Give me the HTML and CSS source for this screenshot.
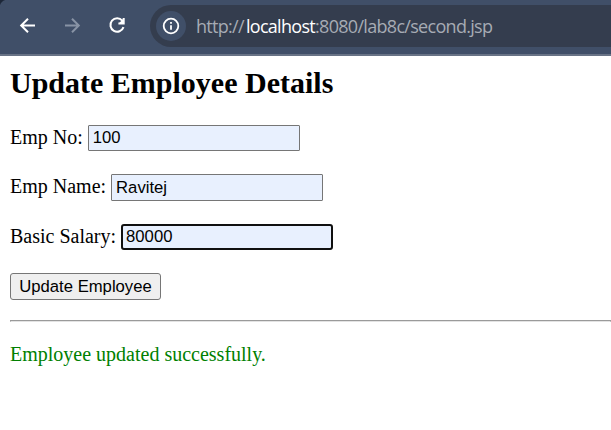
FILE: index.html
```html
<!DOCTYPE html>
<html lang="en">
<head>
<meta charset="utf-8">
<title>Update Employee</title>
<link rel="stylesheet" href="styles.css">
</head>
<body>
<header class="toolbar">
  <svg class="icon" viewBox="0 0 20 20"><path d="M18 9.5H4.5M11 2.7L4.2 9.5l6.8 6.8"/></svg>
  <svg class="icon icon-disabled" viewBox="0 0 20 20"><path d="M3 9.5h13.5M10 2.7l6.8 6.8-6.8 6.8"/></svg>
  <svg class="icon" viewBox="0 0 20 20"><path d="M15.3 4.7A6.7 6.7 0 1 0 16.5 11.1M16.7 2v5.4h-5.3"/><path class="solid" d="M16.7 2.5v5h-5z"/></svg>
  <div class="address">
    <span class="site-info"><svg class="icon-info" viewBox="0 0 18 18"><circle cx="9" cy="9" r="7.3"/><path d="M9 8.2v4.5M9 5v1.8"/></svg></span>
    <span class="url">http://<span class="host">localhost</span>:8080/lab8c/second.jsp</span>
  </div>
</header>
<main class="page">
  <h2>Update Employee Details</h2>
  <form class="form">
    <div class="row"><label for="no">Emp No:</label><input id="no" type="text" value="100"></div>
    <div class="row row-name"><label for="name">Emp Name:</label><input class="tall" id="name" type="text" value="Ravitej"></div>
    <div class="row"><label for="salary">Basic Salary:</label><input class="focused" id="salary" type="text" value="80000"></div>
    <button type="button">Update Employee</button>
  </form>
  <hr>
  <p class="message">Employee updated successfully.</p>
</main>
</body>
</html>
```
FILE: styles.css
```css
* { box-sizing: border-box; }
body {
  margin: 0;
  height: 430px;
  overflow: hidden;
  background: #fff;
  color: #000;
  font: 20px/23px "Liberation Serif", serif;
}
.toolbar {
  display: flex;
  align-items: center;
  height: 56px;
  padding: 0 0 3px 17px;
  background: radial-gradient(circle at 8px 8px, #404f68 8px, #1d2738 9px) 0 0 / 8px 8px no-repeat, #404f68;
  border-bottom: 2px solid #687386;
}
.icon {
  flex: none;
  width: 20px;
  height: 20px;
  margin-right: 25px;
  fill: none;
  stroke: #fff;
  stroke-width: 2;
}
.icon-disabled { stroke: #8893a5; }
.icon .solid { fill: #fff; stroke: none; }
.address {
  display: flex;
  align-items: center;
  flex: 1;
  height: 42px;
  margin-left: -2px;
  padding-left: 6px;
  border-radius: 21px 0 0 21px;
  background: #343d4e;
}
.site-info {
  display: flex;
  align-items: center;
  justify-content: center;
  width: 30px;
  height: 30px;
  margin-right: 10px;
  border-radius: 50%;
  background: #404f68;
}
.icon-info {
  width: 18px;
  height: 18px;
  fill: none;
  stroke: #fff;
  stroke-width: 1.8;
}
.url {
  color: #a6abb4;
  font: 18px/26px "Open Sans", sans-serif;
  letter-spacing: -0.7px;
  white-space: nowrap;
}
.host { margin-left: 2px; color: #fff; }
.page { padding: 10px 0 0 10px; }
h2 {
  margin: 0 0 25px;
  font-size: 30px;
  line-height: 34px;
}
.form {
  display: flex;
  flex-direction: column;
  align-items: flex-start;
}
.row {
  display: flex;
  align-items: flex-start;
  gap: 5px;
  height: 49px;
}
.row-name { height: 50px; }
label { padding-top: 1px; }
input {
  width: 212px;
  height: 26px;
  padding: 0 4px;
  border: 1px solid #767676;
  border-radius: 1px;
  outline: none;
  background: #e8f0fe;
  color: #000;
  font: 16.67px "Liberation Sans", sans-serif;
}
.tall { height: 27px; }
.focused {
  padding: 0 3px;
  border: 2px solid #101010;
  border-radius: 3px;
}
button {
  width: 151px;
  height: 27px;
  padding: 0;
  border: 1px solid #767676;
  border-radius: 3px;
  background: #efefef;
  color: #000;
  font: 16.67px "Liberation Sans", sans-serif;
}
hr {
  height: 2px;
  margin: 20px 0 21px;
  border: 1px solid #9a9a9a;
  border-bottom-color: #e3e3e3;
}
.message { margin: 0; color: #008000; }
```
